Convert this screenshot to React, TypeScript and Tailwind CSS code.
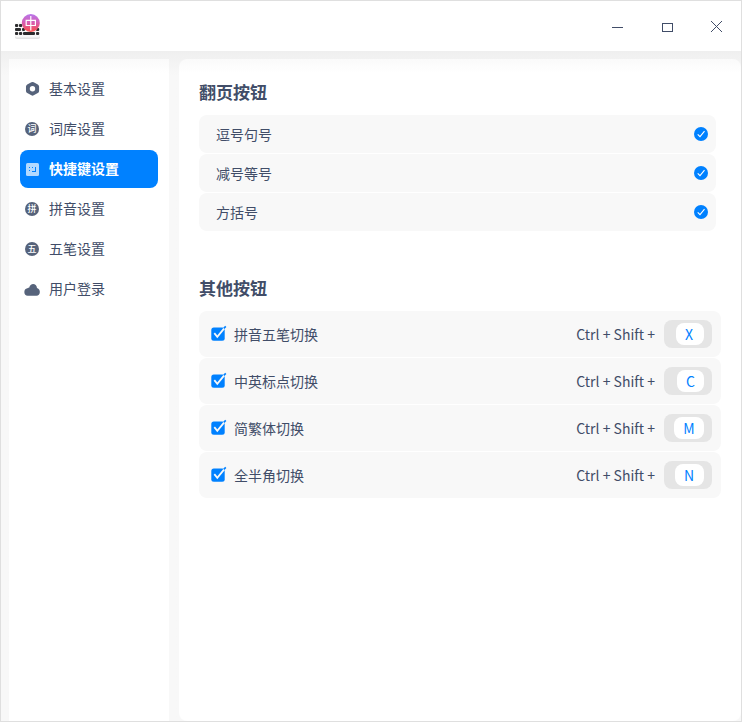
import React from "react";

const ink = "#414d68";

function AppLogo() {
  return (
    <svg width="28" height="28" viewBox="0 0 28 28" className="block">
      <defs>
        <linearGradient id="ball" x1="0" y1="0" x2="0" y2="1">
          <stop offset="0" stopColor="#b777ec" />
          <stop offset="0.5" stopColor="#d95cae" />
          <stop offset="1" stopColor="#fb5048" />
        </linearGradient>
      </defs>
      <rect x="1" y="10" width="25" height="16" rx="2" fill="#e2e2e2" />
      <rect x="1" y="9.5" width="25" height="15" rx="2" fill="#f8f8f8" />
      <g fill="#2b2b2d">
        <rect x="1" y="11" width="3.2" height="3" rx="1" />
        <rect x="5" y="11" width="3.2" height="3" rx="1" />
        <rect x="1" y="15" width="6" height="3" rx="1" />
        <rect x="8" y="15" width="3" height="3" rx="1" />
        <rect x="22" y="15" width="3.2" height="3" rx="1" />
        <rect x="1" y="19" width="3.2" height="3" rx="1" />
        <rect x="5" y="19" width="3.2" height="3" rx="1" />
        <rect x="9" y="19" width="12" height="3" rx="1" />
        <rect x="22" y="19" width="3.2" height="3" rx="1" />
      </g>
      <circle cx="16.800" cy="10" r="9" fill="url(#ball)" />
      <path d="M12.200 7.300h9.200v5.200h-9.200zM16.800 3v14.500" fill="none" stroke="#fff" strokeWidth="1.200" />
    </svg>
  );
}

function GearIcon() {
  return (
    <svg width="16" height="16" viewBox="0 0 16 16" className="block">
      <path
        d="M7.300 1.300q1.100-.6 2.200 0l4 2.100q1.200.7 1.200 2v4.200q0 1.300-1.200 2l-4 2.200q-1.100.6-2.200 0l-4-2.200q-1.200-.7-1.200-2V5.400q0-1.300 1.200-2z"
        transform="translate(-.2 0) scale(1.040)"
        fill="#56637b"
      />
      <circle cx="8.500" cy="7.800" r="2.700" fill="#fff" />
    </svg>
  );
}

function GlyphIcon({ glyph }: { glyph: string }) {
  return (
    <span className="mb-px flex h-3.5 w-3.5 items-center justify-center rounded-full bg-[#56637b] text-[9px] leading-[14px] font-medium text-white">
      {glyph}
    </span>
  );
}

function KeyboardIcon() {
  return (
    <svg width="16" height="16" viewBox="0 0 16 16" className="block">
      <rect x="2" y="2" width="13" height="13" rx="1.500" fill="#b2d9ff" />
      <path d="M5 6h1v1H5zM8 6h1v1H8zM5 9h1v1H5zM11 6h1v5H8v-1h3z" fill="#0081ff" />
    </svg>
  );
}

function CloudIcon() {
  return (
    <svg width="16" height="16" viewBox="0 0 16 16" className="block overflow-visible">
      <path
        d="M3.700 14.800A3.800 3.800 0 0 1 3.400 7.300C4 6.800 4.800 6.600 5.300 6.600 6 1.800 12.600 1.700 13 7 17.200 8.200 16.600 14.800 12.500 14.800z"
        fill="#56637b"
      />
    </svg>
  );
}

function RoundCheck() {
  return (
    <svg width="14" height="14" viewBox="0 0 14 14" className="block">
      <circle cx="7" cy="7" r="7" fill="#0081ff" />
      <path d="M3.700 7.300 6 9.700 10.500 4.200" fill="none" stroke="#fff" strokeWidth="1.100" />
    </svg>
  );
}

function BoxCheck() {
  return (
    <svg width="16" height="16" viewBox="0 0 16 16" className="block overflow-visible">
      <rect x="0.300" y="1.400" width="13.400" height="13.400" rx="2.500" fill="#0081ff" />
      <path d="M3.300 7.200 6.300 10.800 13.800 1.600" fill="none" stroke="#f8f8f8" strokeWidth="1.800" />
      <path d="M12.800 2.300 14.800 .3" stroke="#0081ff" strokeWidth="1.700" />
    </svg>
  );
}

const menu = [
  { label: "基本设置", icon: <GearIcon /> },
  { label: "词库设置", icon: <GlyphIcon glyph="词" /> },
  { label: "快捷键设置", icon: <KeyboardIcon />, active: true },
  { label: "拼音设置", icon: <GlyphIcon glyph="拼" /> },
  { label: "五笔设置", icon: <GlyphIcon glyph="五" /> },
  { label: "用户登录", icon: <CloudIcon /> },
];

const pageKeys = ["逗号句号", "减号等号", "方括号"];

const shortcuts = [
  { label: "拼音五笔切换", letter: "X", width: "w-7", pad: "pr-0.5" },
  { label: "中英标点切换", letter: "C", width: "w-[27px]", pad: "" },
  { label: "简繁体切换", letter: "M", width: "w-[30px]", pad: "" },
  { label: "全半角切换", letter: "N", width: "w-[29px]", pad: "pr-px" },
];

export default function App() {
  return (
    <div className="flex h-[722px] w-[742px] flex-col overflow-hidden border border-[#dfdfdf] bg-white font-['Noto_Sans_CJK_SC',sans-serif] text-sm text-[#414d68]">
      <header className="flex h-[50px] shrink-0 items-start justify-between pl-[13px]">
        <div className="pt-3">
          <AppLogo />
        </div>
        <svg width="131" height="50" viewBox="0 0 131 50" fill="none" stroke={ink} shapeRendering="crispEdges">
          <path d="M2 26.500h11" />
          <path d="M52.500 22.500h10v8h-10z" />
          <path d="M101 20l11 11M112 20l-11 11" />
        </svg>
      </header>

      <div className="flex min-h-0 flex-1 bg-[#f8f8f8] bg-linear-to-b from-[#efefef] to-[#f8f8f8] to-[24px] pt-2 pl-2">
        <nav className="flex w-40 shrink-0 flex-col gap-0.5 bg-white bg-linear-to-b from-[#fafafa] to-white to-[14px] pt-[11px] pr-[11px] pl-[11px]">
          {menu.map((m) => (
            <div
              key={m.label}
              className={`flex h-[38px] items-center rounded-lg pl-1 ${
                m.active ? "bg-[#0081ff] font-bold text-white" : ""
              }`}
            >
              <span className="flex w-4 justify-center">{m.icon}</span>
              <span className="mb-0.5 ml-[9px] leading-5">{m.label}</span>
            </div>
          ))}
        </nav>

        <main className="ml-2.5 flex-1 rounded-lg bg-white bg-linear-to-b from-[#fafafa] to-white to-[14px] pl-5">
          <h2 className="pt-[21px] text-[17px] leading-6 font-bold">翻页按钮</h2>
          <div className="mt-[11px] flex w-[517px] flex-col gap-px">
            {pageKeys.map((k) => (
              <div key={k} className="flex h-[38px] items-center justify-between rounded-lg bg-[#f8f8f8] pr-2 pl-[17px]">
                <span className="leading-5">{k}</span>
                <RoundCheck />
              </div>
            ))}
          </div>

          <h2 className="mt-[45px] text-[17px] leading-6 font-bold">其他按钮</h2>
          <div className="mt-[11px] flex w-[522px] flex-col gap-px">
            {shortcuts.map((s) => (
              <div key={s.label} className="flex h-[46px] items-center rounded-lg bg-[#f8f8f8] pr-[9px] pl-3">
                <BoxCheck />
                <span className="ml-[7px] leading-5">{s.label}</span>
                <span className="mr-[9px] ml-auto leading-5">Ctrl + Shift +</span>
                <span className="flex h-7 w-12 items-center justify-end rounded-lg bg-[#e5e5e5] pr-2">
                  <span
                    className={`flex h-[22px] items-center justify-center rounded-lg bg-white leading-5 text-[#0081ff] ${s.width} ${s.pad}`}
                  >
                    {s.letter}
                  </span>
                </span>
              </div>
            ))}
          </div>
        </main>
      </div>
    </div>
  );
}
